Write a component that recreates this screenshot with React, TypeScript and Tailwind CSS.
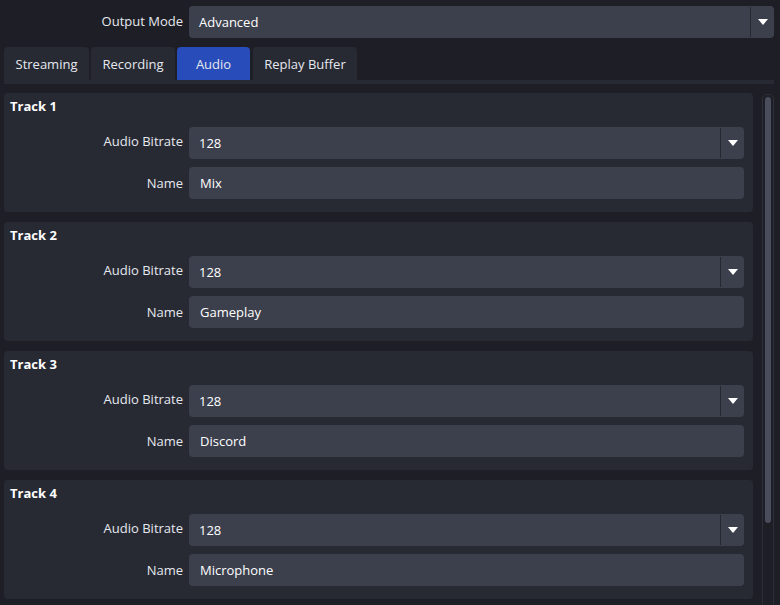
const tracks = [
  { title: 'Track 1', bitrate: '128', name: 'Mix' },
  { title: 'Track 2', bitrate: '128', name: 'Gameplay' },
  { title: 'Track 3', bitrate: '128', name: 'Discord' },
  { title: 'Track 4', bitrate: '128', name: 'Microphone' },
]

const tabs = [
  { label: 'Streaming', w: 'w-[85px]' },
  { label: 'Recording', w: 'w-[84px]' },
  { label: 'Audio', w: 'w-[73px]', active: true },
  { label: 'Replay Buffer', w: 'w-[104px]' },
]

function Arrow() {
  return (
    <svg width="10" height="6" viewBox="0 0 10 6">
      <path d="M0 0h10L5 6z" fill="#ffffff" />
    </svg>
  )
}

function Combo({ value, width }: { value: string; width: string }) {
  return (
    <div className={`${width} h-[32px] flex items-stretch rounded-[4px] bg-[#3c404d]`}>
      <div className="flex-1 flex items-center pl-[10px] pt-[2px] text-white">{value}</div>
      <div className="w-px my-[1px] bg-[#262830]" />
      <div className="w-[23px] flex items-center justify-center">
        <Arrow />
      </div>
    </div>
  )
}

export default function App() {
  return (
    <div
      className="w-[780px] h-[605px] overflow-hidden bg-[#1e1f26] text-[13px] text-[#e6e8ef]"
      style={{ fontFamily: '"Open Sans", "Noto Sans", sans-serif' }}
    >
      <div className="flex items-center pt-[6px]">
        <div className="w-[183px] text-right leading-[32px] -mt-[2px]">Output Mode</div>
        <div className="ml-[6px]">
          <Combo value="Advanced" width="w-[585px]" />
        </div>
      </div>

      <div className="flex pl-[4px] mt-[9px] gap-[2px]">
        {tabs.map((t) => (
          <div
            key={t.label}
            className={`${t.w} h-[33px] pt-[2px] flex items-center justify-center rounded-t-[4px] ${
              t.active ? 'bg-[#284cb9] mr-[1px]' : 'bg-[#272a33]'
            }`}
          >
            {t.label}
          </div>
        ))}
      </div>
      <div className="ml-[4px] w-[770px] h-[4px] bg-[#272a33]" />

      <div className="flex pl-[4px] pt-[9px]">
        <div className="w-[749px] flex flex-col gap-[10px]">
          {tracks.map((t) => (
            <div key={t.title} className="h-[119px] rounded-[4px] bg-[#272a33] pt-[4px]">
              <div className="h-[18px] leading-[18px] pl-[6px] font-bold text-white">{t.title}</div>
              <div className="mt-[12px] flex flex-col gap-[8px]">
                <div className="flex items-center">
                  <div className="w-[179px] text-right -mt-[2px]">Audio Bitrate</div>
                  <div className="ml-[6px]">
                    <Combo value={t.bitrate} width="w-[555px]" />
                  </div>
                </div>
                <div className="flex items-center">
                  <div className="w-[179px] text-right mt-[2px]">Name</div>
                  <div className="ml-[6px] w-[555px] h-[32px] flex items-center pl-[11px] pt-[2px] rounded-[4px] bg-[#3c404d] text-white">
                    {t.name}
                  </div>
                </div>
              </div>
            </div>
          ))}
        </div>
        <div className="ml-[9px] mt-[1px] w-[12px] h-[520px] rounded-[5px] border border-[#2b2e38] px-[2px] pt-[2px]">
          <div className="w-[6px] h-[426px] rounded-[3px] bg-[#4a4e5c]" />
        </div>
      </div>
    </div>
  )
}
